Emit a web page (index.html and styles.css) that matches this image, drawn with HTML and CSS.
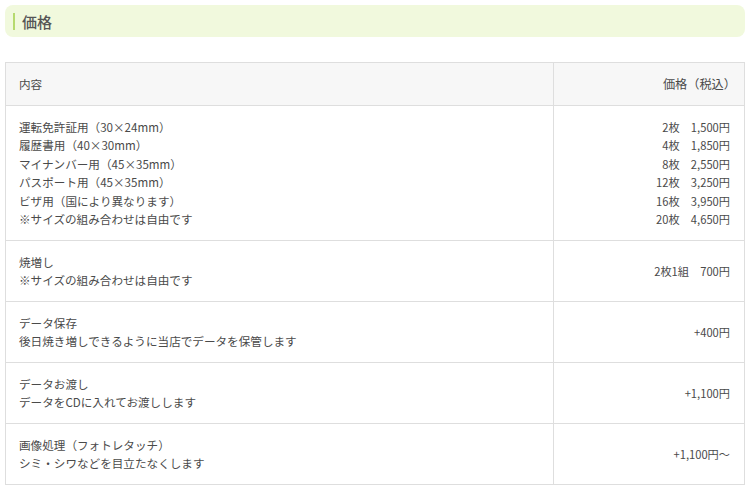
FILE: index.html
```html
<!DOCTYPE html>
<html lang="ja">
<head>
<meta charset="utf-8">
<link rel="stylesheet" href="styles.css">
</head>
<body>
<div class="page">
  <h2 class="heading"><span class="heading-text">価格</span></h2>
  <table class="price-table">
    <thead>
      <tr>
        <th class="col-desc">内容</th>
        <th class="col-price">価格（税込）</th>
      </tr>
    </thead>
    <tbody>
      <tr>
        <td class="col-desc">運転免許証用（30×24mm）<br>履歴書用（40×30mm）<br>マイナンバー用（45×35mm）<br>パスポート用（45×35mm）<br>ビザ用（国により異なります）<br>※サイズの組み合わせは自由です</td>
        <td class="col-price">2枚　1,500円<br>4枚　1,850円<br>8枚　2,550円<br>12枚　3,250円<br>16枚　3,950円<br>20枚　4,650円</td>
      </tr>
      <tr>
        <td class="col-desc">焼増し<br>※サイズの組み合わせは自由です</td>
        <td class="col-price">2枚1組　700円</td>
      </tr>
      <tr>
        <td class="col-desc">データ保存<br>後日焼き増しできるように当店でデータを保管します</td>
        <td class="col-price">+400円</td>
      </tr>
      <tr>
        <td class="col-desc">データお渡し<br>データをCDに入れてお渡しします</td>
        <td class="col-price">+1,100円</td>
      </tr>
      <tr>
        <td class="col-desc">画像処理（フォトレタッチ）<br>シミ・シワなどを目立たなくします</td>
        <td class="col-price">+1,100円～</td>
      </tr>
    </tbody>
  </table>
</div>
</body>
</html>
```

FILE: styles.css
```css
* { box-sizing: border-box; }
html, body { margin: 0; padding: 0; background: #fff; }
body {
  font-family: "Noto Sans CJK JP", "Noto Sans", sans-serif;
  color: #4a4a4a;
}
.page {
  padding: 5px 5px 0 5px;
  width: 750px;
}
.heading {
  margin: 0;
  height: 32px;
  background: #f1f9dd;
  border-radius: 8px;
  padding: 8px 8px;
  display: flex;
  align-items: center;
}
.heading-text {
  display: block;
  border-left: 2px solid #b6da6e;
  padding-left: 7px;
  font-size: 15px;
  font-weight: 500;
  line-height: 17px;
  color: #555;
}
.price-table {
  margin-top: 25px;
  width: 740px;
  border-collapse: collapse;
  font-size: 11.6px;
  line-height: 18.5px;
}
.price-table th,
.price-table td {
  border: 1px solid #dedede;
  padding: 11.5px 14px 11.5px 13px;
  vertical-align: middle;
  font-weight: normal;
}
.price-table th {
  background: #f7f7f7;
  padding-top: 12px;
}
.col-desc { text-align: left; }
.col-price { text-align: right; width: 191px; font-size: 11.2px; }
.price-table th.col-price { font-size: 12.2px; padding-right: 8px; }
```
